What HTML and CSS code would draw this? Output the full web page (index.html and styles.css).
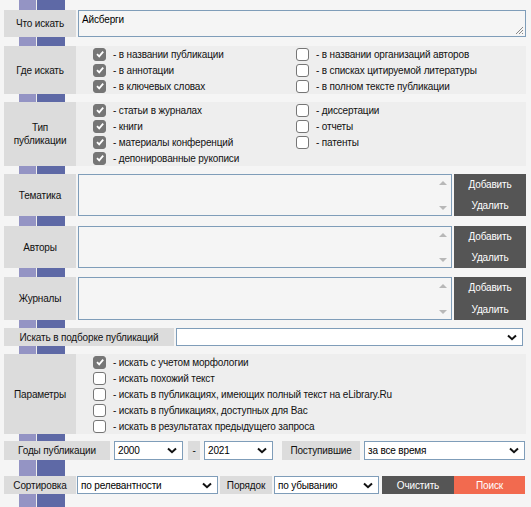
FILE: index.html
```html
<!DOCTYPE html>
<html lang="ru">
<head>
<meta charset="utf-8">
<link rel="stylesheet" href="styles.css">
</head>
<body>
<div class="form">
  <div class="row h27 mb9">
    <div class="lbl w72">Что искать</div>
    <div class="textarea">Айсберги<svg class="grip" width="9" height="9" viewBox="0 0 9 9"><path d="M8 1L1 8M8 4L4 8M8 7L7 8" stroke="#888" stroke-width="1"/></svg></div>
  </div>

  <div class="row panel h48 mb8">
    <div class="lbl w72">Где искать</div>
    <div class="checks">
      <div class="col">
        <div class="ck"><span class="box on"><svg width="10" height="10" viewBox="0 0 10 10"><path d="M2 5.2L4.2 7.4L8.2 2.6" fill="none" stroke="#fff" stroke-width="1.8"/></svg></span>- в названии публикации</div>
        <div class="ck"><span class="box on"><svg width="10" height="10" viewBox="0 0 10 10"><path d="M2 5.2L4.2 7.4L8.2 2.6" fill="none" stroke="#fff" stroke-width="1.8"/></svg></span>- в аннотации</div>
        <div class="ck"><span class="box on"><svg width="10" height="10" viewBox="0 0 10 10"><path d="M2 5.2L4.2 7.4L8.2 2.6" fill="none" stroke="#fff" stroke-width="1.8"/></svg></span>- в ключевых словах</div>
      </div>
      <div class="col">
        <div class="ck"><span class="box"></span>- в названии организаций авторов</div>
        <div class="ck"><span class="box"></span>- в списках цитируемой литературы</div>
        <div class="ck"><span class="box"></span>- в полном тексте публикации</div>
      </div>
    </div>
  </div>

  <div class="row panel h64 mb8">
    <div class="lbl w72">Тип<br>публикации</div>
    <div class="checks">
      <div class="col">
        <div class="ck"><span class="box on"><svg width="10" height="10" viewBox="0 0 10 10"><path d="M2 5.2L4.2 7.4L8.2 2.6" fill="none" stroke="#fff" stroke-width="1.8"/></svg></span>- статьи в журналах</div>
        <div class="ck"><span class="box on"><svg width="10" height="10" viewBox="0 0 10 10"><path d="M2 5.2L4.2 7.4L8.2 2.6" fill="none" stroke="#fff" stroke-width="1.8"/></svg></span>- книги</div>
        <div class="ck"><span class="box on"><svg width="10" height="10" viewBox="0 0 10 10"><path d="M2 5.2L4.2 7.4L8.2 2.6" fill="none" stroke="#fff" stroke-width="1.8"/></svg></span>- материалы конференций</div>
        <div class="ck"><span class="box on"><svg width="10" height="10" viewBox="0 0 10 10"><path d="M2 5.2L4.2 7.4L8.2 2.6" fill="none" stroke="#fff" stroke-width="1.8"/></svg></span>- депонированные рукописи</div>
      </div>
      <div class="col">
        <div class="ck"><span class="box"></span>- диссертации</div>
        <div class="ck"><span class="box"></span>- отчеты</div>
        <div class="ck"><span class="box"></span>- патенты</div>
      </div>
    </div>
  </div>

  <div class="row h42 mb10">
    <div class="lbl w72">Тематика</div>
    <div class="listbox"><div class="sb"><span class="up"></span><span class="dn"></span></div></div>
    <div class="btns"><span>Добавить</span><span>Удалить</span></div>
  </div>

  <div class="row h42 mb9">
    <div class="lbl w72">Авторы</div>
    <div class="listbox"><div class="sb"><span class="up"></span><span class="dn"></span></div></div>
    <div class="btns"><span>Добавить</span><span>Удалить</span></div>
  </div>

  <div class="row h43 mb8">
    <div class="lbl w72">Журналы</div>
    <div class="listbox"><div class="sb"><span class="up"></span><span class="dn"></span></div></div>
    <div class="btns"><span>Добавить</span><span>Удалить</span></div>
  </div>

  <div class="row h18 mb8">
    <div class="lbl w170">Искать в подборке публикаций</div>
    <div class="select grow ml2 mr3"><span></span><svg width="10" height="7" viewBox="0 0 10 7"><path d="M1 1.5L5 5.2L9 1.5" fill="none" stroke="#111" stroke-width="2"/></svg></div>
  </div>

  <div class="row panel h80 mb7">
    <div class="lbl w72">Параметры</div>
    <div class="checks">
      <div class="col wide">
        <div class="ck"><span class="box on"><svg width="10" height="10" viewBox="0 0 10 10"><path d="M2 5.2L4.2 7.4L8.2 2.6" fill="none" stroke="#fff" stroke-width="1.8"/></svg></span>- искать с учетом морфологии</div>
        <div class="ck"><span class="box"></span>- искать похожий текст</div>
        <div class="ck"><span class="box"></span>- искать в публикациях, имеющих полный текст на eLibrary.Ru</div>
        <div class="ck"><span class="box"></span>- искать в публикациях, доступных для Вас</div>
        <div class="ck"><span class="box"></span>- искать в результатах предыдущего запроса</div>
      </div>
    </div>
  </div>

  <div class="row h19 mb16">
    <div class="lbl w106">Годы публикации</div>
    <div class="select w69 ml4"><span>2000</span><svg width="10" height="7" viewBox="0 0 10 7"><path d="M1 1.5L5 5.2L9 1.5" fill="none" stroke="#111" stroke-width="2"/></svg></div>
    <div class="lbl w12 ml5">-</div>
    <div class="select w69 ml4"><span>2021</span><svg width="10" height="7" viewBox="0 0 10 7"><path d="M1 1.5L5 5.2L9 1.5" fill="none" stroke="#111" stroke-width="2"/></svg></div>
    <div class="lbl w78 ml9">Поступившие</div>
    <div class="select grow ml4 mr1"><span>за все время</span><svg width="10" height="7" viewBox="0 0 10 7"><path d="M1 1.5L5 5.2L9 1.5" fill="none" stroke="#111" stroke-width="2"/></svg></div>
  </div>

  <div class="row h18">
    <div class="lbl w72">Сортировка</div>
    <div class="select w141 ml1"><span>по релевантности</span><svg width="10" height="7" viewBox="0 0 10 7"><path d="M1 1.5L5 5.2L9 1.5" fill="none" stroke="#111" stroke-width="2"/></svg></div>
    <div class="lbl w52 ml2">Порядок</div>
    <div class="select w105 ml2"><span>по убыванию</span><svg width="10" height="7" viewBox="0 0 10 7"><path d="M1 1.5L5 5.2L9 1.5" fill="none" stroke="#111" stroke-width="2"/></svg></div>
    <div class="btn dark ml3">Очистить</div>
    <div class="btn red">Поиск</div>
  </div>
</div>
</body>
</html>
```

FILE: styles.css
```css
* { box-sizing: border-box; }
html, body {
  margin: 0;
  padding: 0;
}
body {
  width: 531px;
  height: 507px;
  overflow: hidden;
  font-family: "Liberation Sans", Arial, sans-serif;
  font-size: 10px;
  letter-spacing: -0.16px;
  color: #111;
  background-color: #f5f5f5;
  background-image: linear-gradient(to right,
    transparent 0, transparent 19px,
    #9494c4 19px, #9494c4 36px,
    #eeeeee 36px, #eeeeee 37px,
    #5e69a6 37px, #5e69a6 65px,
    transparent 65px);
}
.form {
  padding: 10px 5px 0 4px;
  display: flex;
  flex-direction: column;
}
.row {
  display: flex;
  align-items: stretch;
}
.panel { background: #eeeeee; }
.h18 { height: 18px; }
.h19 { height: 19px; }
.h27 { height: 27px; }
.h42 { height: 42px; }
.h43 { height: 43px; }
.h48 { height: 48px; }
.h64 { height: 64px; }
.h80 { height: 80px; }
.mb7 { margin-bottom: 7px; }
.mb8 { margin-bottom: 8px; }
.mb9 { margin-bottom: 9px; }
.mb10 { margin-bottom: 10px; }
.mb16 { margin-bottom: 16px; }
.ml1 { margin-left: 1px; }
.ml2 { margin-left: 2px; }
.ml3 { margin-left: 3px; }
.ml4 { margin-left: 4px; }
.ml5 { margin-left: 5px; }
.ml9 { margin-left: 9px; }
.mr1 { margin-right: 1px; }
.mr3 { margin-right: 3px; }

.lbl {
  background: #dcdcdc;
  display: flex;
  align-items: center;
  justify-content: center;
  text-align: center;
  line-height: 13px;
  flex: none;
  color: #111;
  white-space: nowrap;
}
.w12 { width: 12px; }
.w52 { width: 52px; }
.w72 { width: 72px; }
.w78 { width: 78px; }
.w106 { width: 106px; }
.w170 { width: 170px; }
.w69 { width: 69px; }
.w105 { width: 105px; }
.w141 { width: 141px; }

.textarea {
  flex: 1;
  margin-left: 2px;
  border: 1px solid #7f9db9;
  background: #f5f5f5;
  padding: 3px 2px 2px 3px;
  display: flex;
  align-items: flex-start;
  justify-content: space-between;
  color: #000;
}
.grip { align-self: flex-end; margin: 0 -1px -1px 0; }

.checks {
  display: flex;
  padding-left: 17px;
}
.col { width: 203px; display: flex; flex-direction: column; }
.col.wide { width: 420px; }
.ck {
  height: 16px;
  display: flex;
  align-items: center;
  white-space: nowrap;
  color: #111;
}
.box {
  width: 13px;
  height: 13px;
  border: 1px solid #767676;
  border-radius: 3px;
  background: #fff;
  margin-right: 7px;
  display: flex;
  align-items: center;
  justify-content: center;
  flex: none;
}
.box.on { background: #767676; }

.listbox {
  flex: 1;
  margin-left: 2px;
  border: 1px solid #7f9db9;
  background: #f5f5f5;
  display: flex;
  justify-content: flex-end;
}
.sb {
  width: 16px;
  display: flex;
  flex-direction: column;
  justify-content: space-between;
  align-items: center;
  padding: 6px 0 5px;
}
.up, .dn {
  width: 0; height: 0;
  border-left: 4px solid transparent;
  border-right: 4px solid transparent;
}
.up { border-bottom: 4px solid #b8b8b8; }
.dn { border-top: 4px solid #b8b8b8; }

.btns {
  width: 72px;
  margin-left: 2px;
  background: #555555;
  color: #fff;
  display: flex;
  flex-direction: column;
  justify-content: space-around;
  align-items: center;
  flex: none;
}

.select {
  border: 1px solid #7f9db9;
  background: #fff;
  display: flex;
  align-items: center;
  justify-content: space-between;
  padding: 0 5px 0 3px;
  flex: none;
  color: #000;
}
.select.grow { flex: 1; }

.btn {
  width: 72px;
  display: flex;
  align-items: center;
  justify-content: center;
  color: #fff;
  flex: none;
}
.btn.dark { background: #555555; }
.btn.red { background: #f26a4f; width: 71px; }
```
